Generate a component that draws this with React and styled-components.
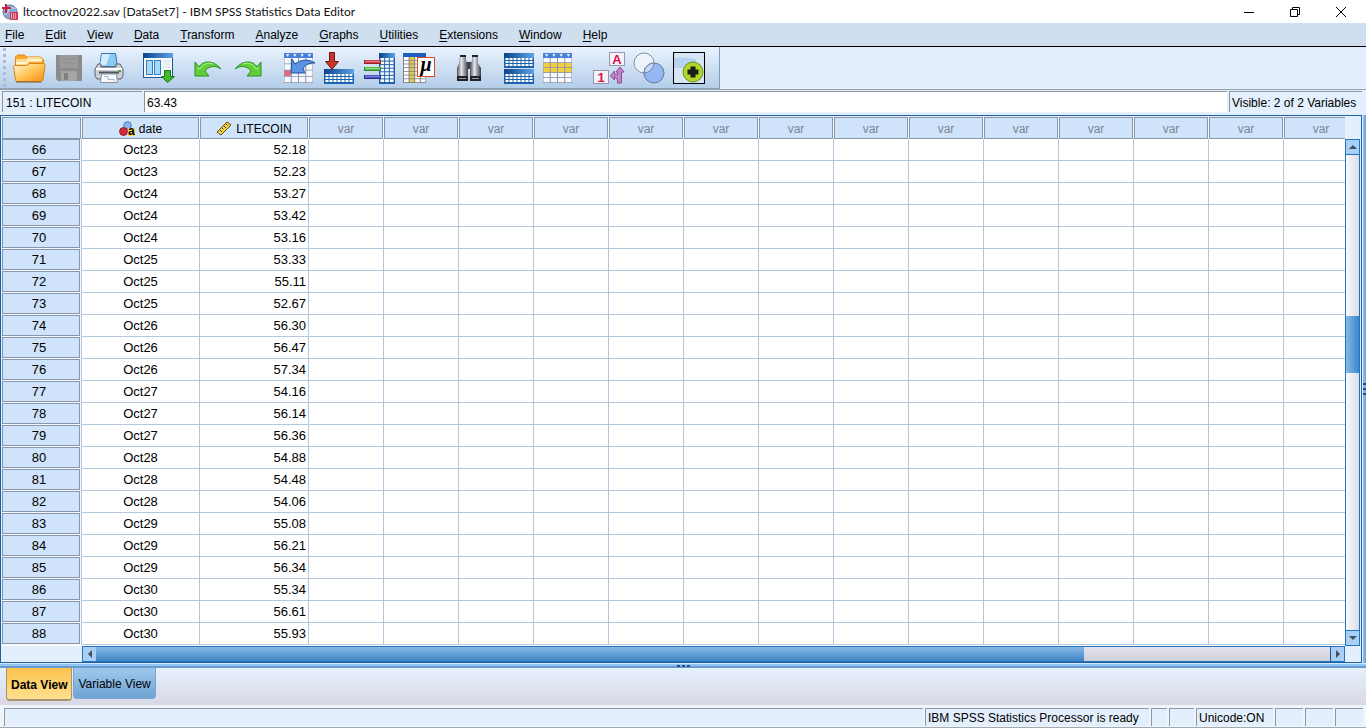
import React from "react";
import styled, { createGlobalStyle } from "styled-components";

const GlobalStyle = createGlobalStyle`
  * {
    box-sizing: border-box;
  }
  body {
    margin: 0;
    overflow: hidden;
    font-family: "Liberation Sans", Arial, sans-serif;
    font-size: 12px;
    color: #000;
  }
  button, input {
    font: inherit;
    color: inherit;
  }
`;

const Window = styled.div`
  display: flex;
  flex-direction: column;
  height: 100vh;
  background: #e3effc;
`;

const TitleBar = styled.header`
  display: flex;
  align-items: center;
  height: 23px;
  padding: 0 2px;
  background: #fff;
`;
const Title = styled.h1`
  flex: 1;
  margin: 0;
  padding-left: 5px;
  font: 400 12px/20px Lato, "Open Sans", sans-serif;
  color: #111;
`;
const WindowButton = styled.button`
  display: flex;
  align-items: center;
  justify-content: center;
  width: 46px;
  height: 20px;
  padding: 0;
  border: none;
  background: none;
`;

const MenuBar = styled.nav`
  display: flex;
  gap: 21px;
  height: 24px;
  padding: 0 5px;
  line-height: 24px;
  background: #cfdff0;
  border-bottom: 1px solid #000;
`;
const MenuLink = styled.a`
  color: #000;
  text-decoration: none;
  u {
    text-underline-offset: 2px;
  }
`;

const ToolRow = styled.div`
  display: flex;
  height: 43px;
  border-bottom: 1px solid #9a9fa8;
`;
const ToolBar = styled.div`
  display: flex;
  gap: 10px;
  height: 42px;
  padding-right: 10px;
  background: linear-gradient(#eaf3fd, #b3cde9);
  border-right: 1px solid #7f9db9;
  border-bottom: 1px solid #8ea4bd;
`;
const Grip = styled.div`
  width: 6px;
  margin: 1px -10px 1px 3px;
  border-left: 3px dotted #a4bedb;
`;
const ToolGroup = styled.div`
  display: flex;
`;
const ToolButton = styled.button`
  display: flex;
  align-items: center;
  justify-content: center;
  width: 40px;
  height: 41px;
  padding: 0;
  border: none;
  background: none;
`;

const CellBar = styled.div`
  display: flex;
  gap: 2px;
  height: 25px;
  padding: 1px 4px 3px 2px;
`;
const CellName = styled.div`
  width: 140px;
  padding-left: 3px;
  line-height: 22px;
  border-top: 1px solid #8b98a8;
  border-left: 1px solid #8b98a8;
`;
const CellInput = styled.input`
  flex: 1;
  min-width: 0;
  padding: 2px 2px 0;
  border: none;
  border-top: 1px solid #8b98a8;
  border-left: 1px solid #8b98a8;
  background: #fff;
  outline: none;
`;
const VisibleInfo = styled.div`
  width: 133px;
  padding-left: 2px;
  line-height: 22px;
  white-space: nowrap;
  border-top: 1px solid #8b98a8;
  border-left: 1px solid #8b98a8;
`;

const Main = styled.main`
  flex: 1;
  display: flex;
  min-height: 0;
`;
const GridFrame = styled.section`
  flex: 1;
  display: flex;
  flex-direction: column;
  min-width: 0;
  padding-top: 1px;
  border: 1px solid #1f62a3;
`;
const GridTop = styled.div`
  flex: 1;
  display: flex;
  min-height: 0;
  padding-left: 1px;
`;
const GridView = styled.div`
  flex: 1;
  min-width: 0;
  overflow: hidden;
  background: #fff;
`;

const Table = styled.table`
  table-layout: fixed;
  width: 0;
  border-collapse: separate;
  border-spacing: 0;
`;
const HeadCell = styled.th`
  height: 22px;
  padding: 0 1px 0 0;
  font-weight: 400;
  background: #f4f9ff;
`;
const HeadLabel = styled.span`
  display: flex;
  align-items: center;
  justify-content: center;
  gap: 4px;
  height: 22px;
  padding-top: 2px;
  color: ${(props) => (props.$empty ? "#7c8794" : "#000")};
  background: #cfe3fb;
  border: 1px solid #8796aa;
`;
const RowHead = styled.th`
  height: 22px;
  padding: 0 1px 1px 0;
  font-size: 13px;
  font-weight: 400;
  background: #f4f9ff;
  border-right: 1px solid #b4c7dd;
`;
const RowNumber = styled.span`
  display: block;
  height: 21px;
  padding-right: 4px;
  line-height: 19px;
  text-align: center;
  background: #cfe3fb;
  border: 1px solid #8796aa;
`;
const Cell = styled.td`
  height: 22px;
  padding: 0 2px;
  font-size: 13px;
  line-height: 21px;
  text-align: ${(props) => props.$align || "left"};
  border-right: 1px solid #b4c7dd;
  border-bottom: 1px solid #b4c7dd;
`;

const VScroll = styled.div`
  display: flex;
  flex-direction: column;
  width: 15px;
  margin: 22px 1px 0 0;
  border: 1px solid #2374b8;
  background: linear-gradient(to right, #fafafd, #dcdbe4);
`;
const HScroll = styled.div`
  display: flex;
  height: 16px;
  margin: 0 16px 0 81px;
  border: 1px solid #2374b8;
  background: linear-gradient(#e4e4ee, #cfcfda);
`;
const ScrollButton = styled.button`
  display: flex;
  flex: none;
  align-items: center;
  justify-content: center;
  width: 13px;
  height: 14px;
  padding: 0;
  border: none;
  background: #a9cff7;
`;
const VTrack = styled.div`
  flex: 1;
  display: flex;
  flex-direction: column;
  border-top: 1px solid #2374b8;
  border-bottom: 1px solid #2374b8;
  &::before {
    content: "";
    flex: 161;
  }
  &::after {
    content: "";
    flex: 257;
  }
`;
const VThumb = styled.div`
  flex: 57;
  background: linear-gradient(to right, #86b9e8, #3d86c9);
`;
const HTrack = styled.div`
  flex: 1;
  display: flex;
  border-right: 1px solid #1c568c;
  &::after {
    content: "";
    flex: 246;
  }
`;
const HThumb = styled.div`
  flex: 989;
  background: linear-gradient(#86bbe8, #3f84c4);
`;

const SideSplitter = styled.div`
  display: flex;
  align-items: center;
  width: 3px;
  margin-left: 1px;
  background: linear-gradient(to right, #8fc0ee, #6f9fd6);
`;
const Splitter = styled.div`
  display: flex;
  justify-content: center;
  height: 5px;
  border-top: 1px solid #cfe6fb;
  background: linear-gradient(#8ec4f6 50%, #6b9acb 50%);
`;

const TabBar = styled.div`
  display: flex;
  align-items: flex-start;
  gap: 1px;
  height: 37px;
  padding-left: 6px;
  background: linear-gradient(#e4f0fc, #d9d8e5);
`;
const Tab = styled.button`
  height: ${(props) => (props.$active ? 33 : 31)}px;
  padding: ${(props) => (props.$active ? 3 : 1)}px 4px 0;
  font-weight: ${(props) => (props.$active ? 700 : 400)};
  background: ${(props) =>
    props.$active
      ? "linear-gradient(#fdc24e, #fee08f)"
      : "linear-gradient(#a0c8ec, #6fa3d3)"};
  border: 1px solid ${(props) => (props.$active ? "#a8936c" : "#7ba6cf")};
  border-top: none;
  border-bottom-width: ${(props) => (props.$active ? 2 : 1)}px;
  border-radius: 0 0 4px 4px;
`;

const StatusBar = styled.footer`
  display: flex;
  gap: 2px;
  height: 23px;
  padding: 3px 3px 1px 4px;
  background: #f0f5fb;
  border-bottom: 1px solid #a3a9b2;
`;
const StatusCell = styled.div`
  flex: ${(props) => (props.$width ? `0 0 ${props.$width}px` : "1")};
  padding-left: 2px;
  line-height: 18px;
  white-space: nowrap;
  background: #e3effc;
  border-top: 1px solid #8b98a8;
  border-left: 1px solid #8b98a8;
`;

const Icon = ({ children, size = 34 }) => (
  <svg width={size} height={size} viewBox={`0 0 ${size} ${size}`} aria-hidden="true">
    {children}
  </svg>
);

// small data sheet with a blue title strip
const Sheet = ({ x, y, w, h, head, cols, rows }) => {
  const cw = (w - 2) / cols;
  const rh = (h - head - 1) / rows;
  return (
    <g>
      <rect x={x} y={y} width={w} height={h} fill="#1c62ae" />
      <rect x={x} y={y} width={w} height={head} fill="url(#blueHead)" />
      {Array.from({ length: cols * rows }, (_, i) => (
        <rect
          key={i}
          x={x + 1.5 + (i % cols) * cw}
          y={y + head + Math.floor(i / cols) * rh}
          width={cw - 1}
          height={rh - 1}
          fill="#fff"
        />
      ))}
    </g>
  );
};

const Calendar = ({ x, y, w, h, cols, rows, band }) => {
  const cw = w / cols;
  const rh = (h - 5) / rows;
  return (
    <g>
      <rect x={x} y={y} width={w} height={h} fill="#8b95ac" />
      <rect x={x} y={y} width={w} height={5} fill="#4a80d8" />
      {Array.from({ length: cols }, (_, i) => (
        <path
          key={i}
          d={`M${x + i * cw + 2} ${y + 1}h${cw - 4}l-${(cw - 4) / 2} 3z`}
          fill="#e4efff"
        />
      ))}
      {Array.from({ length: cols * rows }, (_, i) => (
        <rect
          key={i}
          x={x + 0.5 + (i % cols) * cw}
          y={y + 5 + Math.floor(i / cols) * rh}
          width={cw - 1}
          height={rh - 0.8}
          fill={band(Math.floor(i / cols), i % cols) || "#f8f9fd"}
        />
      ))}
    </g>
  );
};

const OpenIcon = () => (
  <Icon>
    <defs>
      <linearGradient id="folder" x1="0" y1="0" x2="1" y2="1">
        <stop offset="0" stopColor="#fff6d6" />
        <stop offset="0.5" stopColor="#ffc65a" />
        <stop offset="1" stopColor="#f68a10" />
      </linearGradient>
      <linearGradient id="blueHead" x1="0" y1="0" x2="1" y2="0">
        <stop offset="0" stopColor="#0c4289" />
        <stop offset="1" stopColor="#5ba3e8" />
      </linearGradient>
    </defs>
    <path d="M3.500 29V6l2-2h7l2 2h14l3 3v18l-2 3z" fill="#fba929" stroke="#d98613" />
    <path d="M4 8h10l2-2h12l2 2v3H17l-2 3H4z" fill="#ffd98a" />
    <path d="M4 12h10l3-3h13" fill="none" stroke="#fff4d4" strokeWidth="2" />
    <path d="M1.500 15.500q0-1 1-1h12l3-2h14q2 0 1.500 2l-2 14q0 2-2 2H5.500q-2 0-2-2z" fill="url(#folder)" stroke="#dd8511" />
    <path d="M4 31h25" stroke="#7b5a2c" />
  </Icon>
);
const SaveIcon = () => (
  <Icon>
    <path d="M4 4h26v26H6l-2-2z" fill="#8b8b8b" />
    <path d="M8 4h18v13H8z" fill="#9b9b9b" />
    <path d="M10 8h14M10 12h14" stroke="#8d8d8d" />
    <path d="M9 20h16v10H9z" fill="#a5a5a5" />
    <path d="M12 22h4v7h-4z" fill="#808080" />
  </Icon>
);
const PrintIcon = () => (
  <Icon>
    <path d="M9.500 2.500h14l2 13h-18z" fill="#8cc9f3" stroke="#2f78b4" />
    <path d="M10 3h8l-4 11H8z" fill="#d4edfc" />
    <path d="M6 13h3v3h15v-3h4l3 5v7l-2 3H5l-2-3v-7z" fill="#cdcfd4" stroke="#5f646c" />
    <path d="M4 18h26" stroke="#fff" strokeWidth="2" />
    <path d="M7 21.500h20" stroke="#4f545c" strokeWidth="2" />
    <path d="M9.500 23h15l1 8.500h-17z" fill="#f7f9fc" stroke="#8a929e" />
    <path d="M12 25.500h4v3h6v2" fill="none" stroke="#9cb9dc" />
    <path d="M26 19h3v2h-3z" fill="#5a9a4a" />
  </Icon>
);
const DialogRecallIcon = () => (
  <Icon>
    <rect x="1.500" y="2.500" width="29" height="24" fill="#f5f8fb" stroke="#27588e" />
    <rect x="1" y="2" width="30" height="5" fill="url(#blueHead)" />
    <rect x="4.500" y="9.500" width="6" height="14" fill="#a6d8fa" stroke="#3180c1" />
    <rect x="12.500" y="9.500" width="6" height="14" fill="#a6d8fa" stroke="#3180c1" />
    <path d="M21 10h7M21 13h7M21 16h7" stroke="#d3dce6" />
    <path d="M22.500 19.500h6v6h4l-7 6-6-6h3z" fill="#43b72d" stroke="#147314" />
  </Icon>
);
const UndoIcon = () => (
  <Icon>
    <path
      d="M3 11l4 5C10 10 21 8 29 18 23 14 17 15 13 20l4 5H3z"
      fill="#62cf39"
      stroke="#259325"
      strokeLinejoin="round"
    />
    <path d="M5 17l3 1c3-5 8-7 13-5" fill="none" stroke="#b8f18f" />
  </Icon>
);
const RedoIcon = () => (
  <Icon>
    <path
      d="M29 11l-4 5C22 10 11 8 3 18 9 14 15 15 19 20l-4 5h14z"
      fill="#62cf39"
      stroke="#259325"
      strokeLinejoin="round"
    />
    <path d="M27 17l-3 1c-3-5-8-7-13-5" fill="none" stroke="#b8f18f" />
  </Icon>
);
const GoToCaseIcon = () => (
  <Icon>
    <Calendar
      x={2} y={2} w={29} h={30} cols={4} rows={4}
      band={(r, c) => (r === 2 && c === 0 ? "#e36b78" : null)}
    />
    <path
      d="M10 8l3 5c6-5 14-5 20-1-7 0-10 2-12 6l2 4H9z"
      fill="#5b94e3"
      stroke="#1c4f9e"
    />
  </Icon>
);
const GoToVariableIcon = () => (
  <Icon>
    <Sheet x={2} y={18} w={30} h={15} head={5} cols={7} rows={3} />
    <path d="M7.500 1.500h5v9h4l-6.500 8-6.500-8h4z" fill="#c9342c" stroke="#6b1414" />
  </Icon>
);
const VariablesIcon = () => (
  <Icon>
    <Sheet x={17} y={2} w={16} h={31} head={5} cols={3} rows={7} />
    <path d="M2 11h17" stroke="#98202b" strokeWidth="4" />
    <path d="M3 10.500h15" stroke="#f06d78" strokeWidth="2" />
    <path d="M2 18h17" stroke="#2d8d26" strokeWidth="4" />
    <path d="M3 17.500h15" stroke="#8ae077" strokeWidth="2" />
    <path d="M2 26h17" stroke="#292d91" strokeWidth="4" />
    <path d="M3 25.500h15" stroke="#7a7fe2" strokeWidth="2" />
  </Icon>
);
const DescriptivesIcon = () => (
  <Icon>
    <rect x="1" y="2" width="23" height="30" fill="#7f7f89" />
    <rect x="1" y="2" width="23" height="4" fill="#1d5fc0" />
    {Array.from({ length: 28 }, (_, i) => (
      <rect
        key={i}
        x={2 + (i % 4) * 5.6}
        y={6 + Math.floor(i / 4) * 3.7}
        width="4.600"
        height="2.900"
        fill={i % 4 === 1 ? "#e5c850" : "#fff"}
      />
    ))}
    <rect x="15.500" y="6.500" width="17" height="19" fill="#fff" stroke="#d84a28" />
    <text x="24" y="20" textAnchor="middle" fontFamily="Liberation Serif, serif" fontSize="20" fontStyle="italic" fontWeight="700">
      μ
    </text>
  </Icon>
);
const FindIcon = () => (
  <Icon>
    <defs>
      <linearGradient id="barrel" x1="0" y1="0" x2="1" y2="0">
        <stop offset="0" stopColor="#4a4e56" />
        <stop offset="0.400" stopColor="#e6e8ec" />
        <stop offset="1" stopColor="#3a3d44" />
      </linearGradient>
    </defs>
    <path d="M14 11h7v7h-7z" fill="#3b3f47" />
    <path d="M8 4h6v6l2 3v17H5V17l2-5z" fill="url(#barrel)" />
    <path d="M20 4h6v8l3 5v13H18V13l2-3z" fill="url(#barrel)" />
    <path d="M8 4h6v2H8zM20 4h6v2h-6zM5 25h11v5H5zM18 25h11v5H18z" fill="#222429" />
    <path d="M7 27.500h7M20 27.500h7" stroke="#9a9da5" />
  </Icon>
);
const SplitFileIcon = () => (
  <Icon>
    <Sheet x={2} y={2} w={30} h={15} head={5} cols={7} rows={3} />
    <Sheet x={2} y={18} w={30} h={15} head={5} cols={7} rows={3} />
  </Icon>
);
const SelectCasesIcon = () => (
  <Icon>
    <Calendar
      x={1} y={2} w={29} h={30} cols={4} rows={5}
      band={(r) => (r === 1 || r === 2 ? "#f3cf40" : null)}
    />
  </Icon>
);
const ValueLabelsIcon = () => (
  <Icon>
    <rect x="17.500" y="1.500" width="15" height="13" fill="#f7f2f8" stroke="#9795b0" />
    <text x="25" y="13" textAnchor="middle" fontSize="13" fontWeight="700" fill="#d6114f">A</text>
    <rect x="1.500" y="19.500" width="15" height="13" fill="#f7f2f8" stroke="#9795b0" />
    <text x="9" y="31" textAnchor="middle" fontSize="13" fontWeight="700" fill="#d6114f">1</text>
    <path
      d="M28 16l4 5h-2.500v11h-4v-3q-1-3-3-3v3l-4-4 4-5v3q2 0 3 1v-3H24z"
      fill="#c485c8"
      stroke="#8b4c91"
    />
  </Icon>
);
const VariableSetsIcon = () => (
  <Icon>
    <circle cx="12" cy="12" r="10" fill="#f3f6fb" fillOpacity="0.800" stroke="#8791a2" />
    <circle cx="22" cy="22" r="10" fill="#8cb2f5" fillOpacity="0.850" stroke="#5f789e" />
    <path d="M22 12A10 10 0 0 1 12 22A10 10 0 0 1 22 12z" fill="#c4d6f5" stroke="#7485a0" />
  </Icon>
);
const ShowAllIcon = () => (
  <Icon>
    <rect x="1.500" y="1.500" width="31" height="31" fill="#d6e6f7" stroke="#000" />
    <path d="M2 7q10-2 22 1v9H2z" fill="#b8d3ef" />
    <circle cx="21" cy="21" r="10" fill="#b2d52e" stroke="#6c9218" />
    <path d="M18.500 15.500h5v3h3v5h-3v3h-5v-3h-3v-5h3z" fill="#1b1f13" />
  </Icon>
);

const AppIcon = () => (
  <Icon size={16}>
    <circle cx="8" cy="8" r="7" fill="#8ba8d5" stroke="#5d789f" />
    <path d="M2 11q4-1 6-8q3 2 6 1" fill="none" stroke="#d3e1f5" />
    <path d="M4 0v9M0 4h9" stroke="#d21b36" strokeWidth="2" />
    <path d="M8 8h8v8H8z" fill="#d13c58" />
    <path d="M9 10h6M9 12h6M9 14h6" stroke="#fff" strokeDasharray="1 1" />
  </Icon>
);
const NominalIcon = () => (
  <Icon size={16}>
    <circle cx="8.500" cy="4.500" r="3.800" fill="#83b4ed" stroke="#4a79b5" />
    <circle cx="4.500" cy="10.500" r="3.900" fill="#d92b36" stroke="#98161f" />
    <rect x="9" y="7" width="7" height="8" fill="#f5dc4c" />
    <text x="9" y="14" fontSize="12" fontWeight="700">a</text>
  </Icon>
);
const ScaleIcon = () => (
  <Icon size={16}>
    <path d="M1 11L11 1l4 3L5 14z" fill="#f6d648" stroke="#5e4b0c" />
    <path d="M4 9l2 2M6 7l1.500 1.500M8 5l2 2M10 3l1.500 1.500" stroke="#3e340e" />
  </Icon>
);
const Arrow = ({ dir }) => {
  const paths = {
    up: "M0 6l4-4 4 4z",
    down: "M0 2h8l-4 4z",
    left: "M6 0v8L2 4z",
    right: "M2 0v8l4-4z",
  };
  return (
    <Icon size={8}>
      <path d={paths[dir]} fill="#454f58" />
    </Icon>
  );
};

const menus = [
  "File", "Edit", "View", "Data", "Transform", "Analyze",
  "Graphs", "Utilities", "Extensions", "Window", "Help",
];

const tools = [
  [["Open", OpenIcon], ["Save", SaveIcon], ["Print", PrintIcon]],
  [["Recall dialogs", DialogRecallIcon]],
  [["Undo", UndoIcon], ["Redo", RedoIcon]],
  [
    ["Go to case", GoToCaseIcon],
    ["Go to variable", GoToVariableIcon],
    ["Variables", VariablesIcon],
    ["Descriptives", DescriptivesIcon],
  ],
  [["Find", FindIcon]],
  [["Split file", SplitFileIcon], ["Select cases", SelectCasesIcon]],
  [
    ["Value labels", ValueLabelsIcon],
    ["Variable sets", VariableSetsIcon],
    ["Show all variables", ShowAllIcon],
  ],
];

const rows = [
  [66, "Oct23", "52.18"],
  [67, "Oct23", "52.23"],
  [68, "Oct24", "53.27"],
  [69, "Oct24", "53.42"],
  [70, "Oct24", "53.16"],
  [71, "Oct25", "53.33"],
  [72, "Oct25", "55.11"],
  [73, "Oct25", "52.67"],
  [74, "Oct26", "56.30"],
  [75, "Oct26", "56.47"],
  [76, "Oct26", "57.34"],
  [77, "Oct27", "54.16"],
  [78, "Oct27", "56.14"],
  [79, "Oct27", "56.36"],
  [80, "Oct28", "54.88"],
  [81, "Oct28", "54.48"],
  [82, "Oct28", "54.06"],
  [83, "Oct29", "55.08"],
  [84, "Oct29", "56.21"],
  [85, "Oct29", "56.34"],
  [86, "Oct30", "55.34"],
  [87, "Oct30", "56.61"],
  [88, "Oct30", "55.93"],
];

const emptyColumns = Array.from({ length: 14 }, (_, i) => i);

const DataGrid = () => (
  <Table>
    <colgroup>
      <col style={{ width: 80 }} />
      <col style={{ width: 118 }} />
      <col style={{ width: 109 }} />
      {emptyColumns.map((c) => (
        <col key={c} style={{ width: 75 }} />
      ))}
    </colgroup>
    <thead>
      <tr>
        <HeadCell>
          <HeadLabel />
        </HeadCell>
        <HeadCell scope="col">
          <HeadLabel>
            <NominalIcon />
            date
          </HeadLabel>
        </HeadCell>
        <HeadCell scope="col">
          <HeadLabel>
            <ScaleIcon />
            LITECOIN
          </HeadLabel>
        </HeadCell>
        {emptyColumns.map((c) => (
          <HeadCell key={c} scope="col">
            <HeadLabel $empty>var</HeadLabel>
          </HeadCell>
        ))}
      </tr>
    </thead>
    <tbody>
      {rows.map(([id, date, price]) => (
        <tr key={id}>
          <RowHead scope="row">
            <RowNumber>{id}</RowNumber>
          </RowHead>
          <Cell $align="center">{date}</Cell>
          <Cell $align="right">{price}</Cell>
          {emptyColumns.map((c) => (
            <Cell key={c} />
          ))}
        </tr>
      ))}
    </tbody>
  </Table>
);

const App = () => {
  const [view, setView] = React.useState("data");
  const [value, setValue] = React.useState("63.43");

  return (
    <Window>
      <GlobalStyle />
      <TitleBar>
        <AppIcon />
        <Title>ltcoctnov2022.sav [DataSet7] - IBM SPSS Statistics Data Editor</Title>
        <WindowButton aria-label="Minimize">
          <Icon size={12}>
            <path d="M1 6.500h10" stroke="#000" />
          </Icon>
        </WindowButton>
        <WindowButton aria-label="Restore">
          <Icon size={12}>
            <path d="M1.500 3.500h7v7h-7zM3.500 3.500v-2h7v7h-2" fill="none" stroke="#000" />
          </Icon>
        </WindowButton>
        <WindowButton aria-label="Close">
          <Icon size={12}>
            <path d="M1 1l10 10M11 1L1 11" stroke="#000" />
          </Icon>
        </WindowButton>
      </TitleBar>

      <MenuBar>
        {menus.map((name) => (
          <MenuLink key={name} href="#">
            <u>{name[0]}</u>
            {name.slice(1)}
          </MenuLink>
        ))}
      </MenuBar>

      <ToolRow>
        <ToolBar>
          <Grip />
          {tools.map((group) => (
            <ToolGroup key={group[0][0]}>
              {group.map(([label, Glyph]) => (
                <ToolButton key={label} aria-label={label}>
                  <Glyph />
                </ToolButton>
              ))}
            </ToolGroup>
          ))}
        </ToolBar>
      </ToolRow>

      <CellBar>
        <CellName>151 : LITECOIN</CellName>
        <CellInput
          aria-label="Cell value"
          value={value}
          onChange={(e) => setValue(e.target.value)}
        />
        <VisibleInfo>Visible: 2 of 2 Variables</VisibleInfo>
      </CellBar>

      <Main>
        <GridFrame>
          <GridTop>
            <GridView>
              <DataGrid />
            </GridView>
            <VScroll>
              <ScrollButton aria-label="Scroll up">
                <Arrow dir="up" />
              </ScrollButton>
              <VTrack>
                <VThumb />
              </VTrack>
              <ScrollButton aria-label="Scroll down">
                <Arrow dir="down" />
              </ScrollButton>
            </VScroll>
          </GridTop>
          <HScroll>
            <ScrollButton aria-label="Scroll left">
              <Arrow dir="left" />
            </ScrollButton>
            <HTrack>
              <HThumb />
            </HTrack>
            <ScrollButton aria-label="Scroll right">
              <Arrow dir="right" />
            </ScrollButton>
          </HScroll>
        </GridFrame>
        <SideSplitter>
          <svg width="3" height="14" aria-hidden="true">
            <path d="M0 2h3M0 7h3M0 12h3" stroke="#234f8e" strokeWidth="2" />
          </svg>
        </SideSplitter>
      </Main>
      <Splitter>
        <svg width="14" height="4" aria-hidden="true">
          <path d="M1 2h3M6 2h3M11 2h3" stroke="#234f8e" strokeWidth="2" />
        </svg>
      </Splitter>

      <TabBar>
        <Tab $active={view === "data"} onClick={() => setView("data")}>
          Data View
        </Tab>
        <Tab $active={view === "variable"} onClick={() => setView("variable")}>
          Variable View
        </Tab>
      </TabBar>

      <StatusBar>
        <StatusCell />
        <StatusCell $width={224}>IBM SPSS Statistics Processor is ready</StatusCell>
        <StatusCell $width={16} />
        <StatusCell $width={25} />
        <StatusCell $width={77}>Unicode:ON</StatusCell>
        <StatusCell $width={28} />
        <StatusCell $width={28} />
        <StatusCell $width={28} />
      </StatusBar>
    </Window>
  );
};

export default App;
